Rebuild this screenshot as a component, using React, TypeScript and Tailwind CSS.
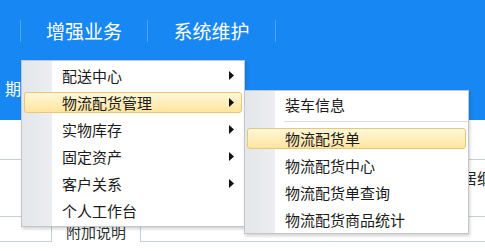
import type { ReactNode } from "react";

const FONT = {
  fontFamily: '"Noto Sans CJK SC", "Noto Sans", sans-serif',
};

const MAIN_ITEMS: { label: string; sub?: boolean }[] = [
  { label: "配送中心", sub: true },
  { label: "物流配货管理", sub: true },
  { label: "实物库存", sub: true },
  { label: "固定资产", sub: true },
  { label: "客户关系", sub: true },
  { label: "个人工作台" },
];

const SUB_ITEMS = ["物流配货单", "物流配货中心", "物流配货单查询", "物流配货商品统计"];

function Arrow() {
  return (
    <svg width="5" height="9" viewBox="0 0 5 9" className="shrink-0">
      <path d="M0 0L5 4.5L0 9z" fill="#111" />
    </svg>
  );
}

function Row({
  active,
  children,
  arrow,
}: {
  active?: boolean;
  children: ReactNode;
  arrow?: boolean;
}) {
  return (
    <div className="relative flex h-[27px] items-center">
      {active && (
        <div className="absolute inset-x-[2px] top-[3px] bottom-[3px] rounded-[3px] border border-[#e6c878] bg-gradient-to-b from-[#fff7d8] to-[#ffe49e]" />
      )}
      <span className="relative ml-[40px] flex-1 text-[15px] leading-none text-[#1b1b1b]">
        {children}
      </span>
      {arrow && (
        <span className="relative mr-[10px]">
          <Arrow />
        </span>
      )}
    </div>
  );
}

function MenuFrame({ children, className }: { children: ReactNode; className: string }) {
  return (
    <div
      className={`absolute border border-[#c3c6ca] bg-white shadow-[1px_2px_3px_rgba(0,0,0,0.18)] ${className}`}
    >
      <div className="absolute inset-y-0 left-0 w-[30px] bg-gradient-to-r from-[#e3e6ea] to-[#eceef1]" />
      <div className="relative">{children}</div>
    </div>
  );
}

export default function App() {
  return (
    <div className="relative h-[251px] w-[485px] overflow-hidden bg-white" style={FONT}>
      {/* blue header */}
      <div className="h-[120px] bg-[#1787f3]">
        <div className="flex h-[62px] items-center">
          <span className="ml-[20px] h-[22px] w-px bg-[#4ea4f6]" />
          <span className="w-[126px] text-center text-[19px] text-white">增强业务</span>
          <span className="h-[22px] w-px bg-[#4ea4f6]" />
          <span className="w-[127px] text-center text-[19px] text-white">系统维护</span>
          <span className="h-[22px] w-px bg-[#4ea4f6]" />
        </div>
        <div className="flex h-[52px] items-center pl-[5px] text-[16px] text-white">期</div>
      </div>

      {/* form behind menus */}
      <div className="h-[40px] border-b border-[#c4d0d8]" />
      <div className="flex h-[57px] items-start border-b border-[#c4d0d8] pt-[10px]">
        <span className="ml-[462px] whitespace-nowrap text-[15px] leading-none text-[#222]">
          居纲
        </span>
      </div>
      <div className="flex h-[25px]">
        <div className="w-[51px] border-b border-[#c4d0d8]" />
        <div className="flex w-[90px] items-end justify-center border-x border-[#c4d0d8] pb-[3px] text-[15px] leading-none text-[#333]">
          附加说明
        </div>
        <div className="flex-1 border-b border-[#c4d0d8]" />
      </div>

      {/* main dropdown */}
      <MenuFrame className="left-[21px] top-[60px] w-[224px] pb-[2px] pt-px">
        {MAIN_ITEMS.map((it) => (
          <Row key={it.label} active={it.label === "物流配货管理"} arrow={it.sub}>
            {it.label}
          </Row>
        ))}
      </MenuFrame>

      {/* submenu */}
      <MenuFrame className="left-[244px] top-[90px] w-[225px]">
        <Row>装车信息</Row>
        <div className="flex h-[7px] items-center">
          <div className="ml-[39px] h-px flex-1 bg-[#d9dde2]" />
        </div>
        {SUB_ITEMS.map((s) => (
          <Row key={s} active={s === "物流配货单"}>
            {s}
          </Row>
        ))}
      </MenuFrame>
    </div>
  );
}
